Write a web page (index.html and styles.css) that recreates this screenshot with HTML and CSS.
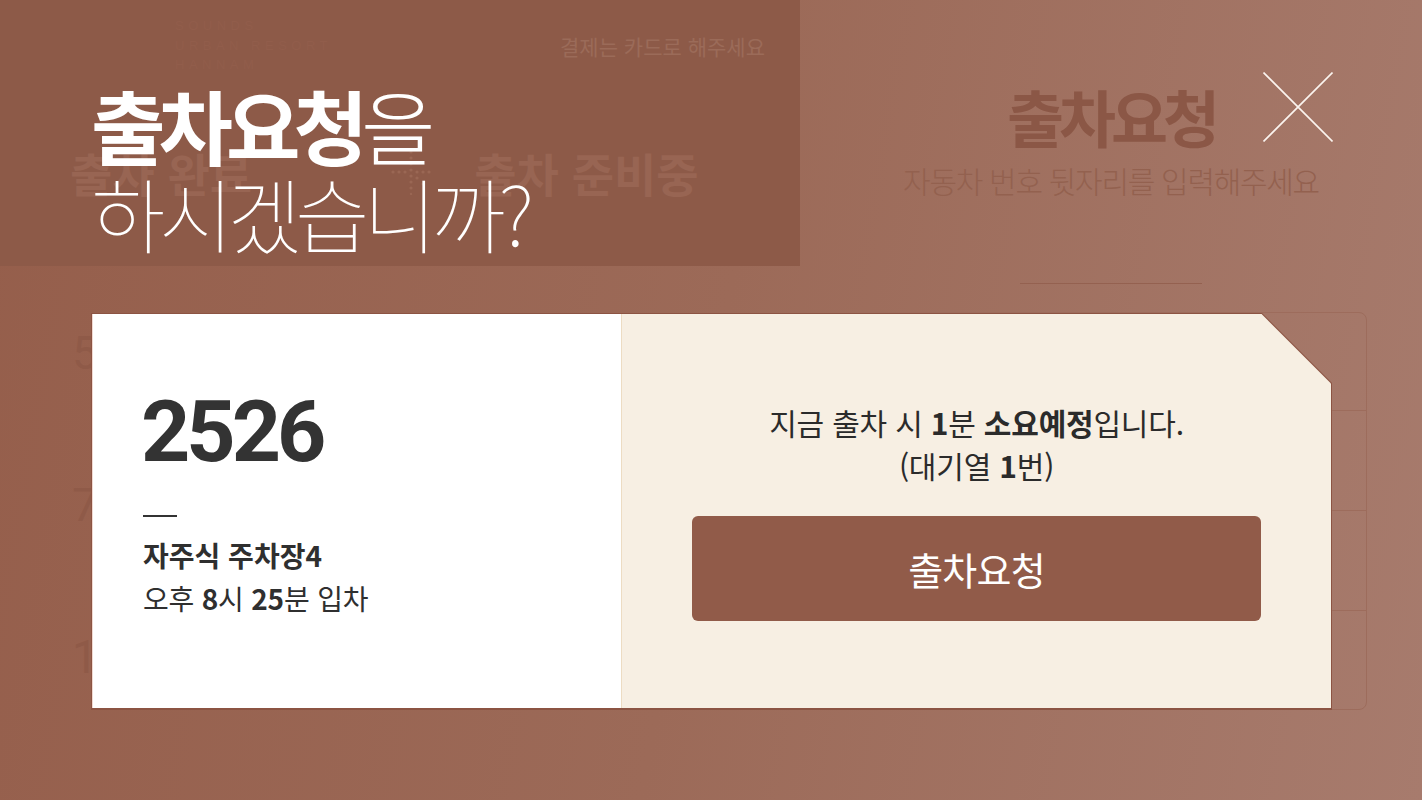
FILE: index.html
```html
<!DOCTYPE html>
<html lang="ko">
<head>
<meta charset="utf-8">
<title>출차요청</title>
<link rel="stylesheet" href="styles.css">
</head>
<body>
<div class="page">
  <section class="pg-left">
    <header class="pg-head">
      <div class="logo-row">
        <div class="logo">
          <span>SOUNDS</span>
          <span>URBAN RESORT</span>
          <span>HANNAM</span>
        </div>
        <p class="pay-note">결제는 카드로 해주세요</p>
      </div>
      <div class="status-row">
        <span class="st st-done">출차 완료</span>
        <svg class="st-dots" width="48" height="46" viewBox="0 0 48 46">
          <g fill="#9a6754">
            <circle cx="24" cy="3" r="1.6"/><circle cx="24" cy="9" r="1.6"/><circle cx="24" cy="15" r="1.6"/>
            <circle cx="24" cy="21" r="1.6"/><circle cx="24" cy="27" r="1.6"/><circle cx="24" cy="33" r="1.6"/>
            <circle cx="24" cy="39" r="1.6"/><circle cx="24" cy="45" r="1.2"/>
            <circle cx="6" cy="23" r="1.6"/><circle cx="12" cy="23" r="1.6"/><circle cx="18" cy="23" r="1.6"/>
            <circle cx="30" cy="23" r="1.6"/><circle cx="36" cy="23" r="1.6"/><circle cx="42" cy="23" r="1.6"/>
            <circle cx="30" cy="29" r="1.6"/><circle cx="36" cy="35" r="1.6"/>
          </g>
        </svg>
        <span class="st st-prep">출차 준비중</span>
      </div>
    </header>
    <ul class="ghost-list">
      <li>5</li>
      <li>7</li>
      <li>1</li>
    </ul>
  </section>
  <section class="pg-right">
    <h2 class="pr-title">출차요청</h2>
    <p class="pr-sub">자동차 번호 뒷자리를 입력해주세요</p>
    <div class="pr-line"></div>
    <div class="keypad">
      <div class="kp-row"></div>
      <div class="kp-row"></div>
      <div class="kp-row"></div>
      <div class="kp-row"></div>
    </div>
  </section>
</div>

<div class="modal">
  <button class="close" aria-label="닫기">
    <svg width="70" height="70" viewBox="0 0 70 70">
      <path d="M0.5 0.5 L69.5 69.5 M69.5 0.5 L0.5 69.5" stroke="#fbf4ef" stroke-width="1.6" fill="none"/>
    </svg>
  </button>
  <h1 class="m-title"><span class="t-strong">출차요청</span><span class="t-light">을</span><br><span class="t-thin">하시겠습니까?</span></h1>
  <div class="card">
    <div class="card-inner">
      <div class="car-info">
        <div class="plate">2526</div>
        <div class="dash"></div>
        <div class="lot">자주식 주차장<span class="num">4</span></div>
        <div class="time">오후 <span class="num">8</span>시 <span class="num">25</span>분 입차</div>
      </div>
      <div class="req">
        <p class="req-text">지금 출차 시 <b>1</b>분 <b>소요예정</b>입니다.<br>(대기열 <b>1</b>번)</p>
        <button class="req-btn">출차요청</button>
      </div>
    </div>
  </div>
</div>
</body>
</html>
```

FILE: styles.css
```css
* { box-sizing: border-box; }

body {
  margin: 0;
  width: 1422px;
  height: 800px;
  overflow: hidden;
  position: relative;
  font-family: "Noto Sans CJK KR", "Noto Sans", sans-serif;
  background: linear-gradient(100deg, #955e4b 0%, #9c6a58 50%, #a77b6d 100%);
}

/* ---------- background page (dimmed) ---------- */
.page {
  display: grid;
  grid-template-columns: 800px 1fr;
  height: 800px;
}

.pg-head {
  height: 266px;
  background: #8d5a48;
  padding-top: 16px;
}

.logo-row {
  display: flex;
  align-items: flex-start;
}

.logo {
  display: flex;
  flex-direction: column;
  padding-left: 175px;
  font-family: "Liberation Sans", Arial, sans-serif;
  font-size: 13px;
  letter-spacing: 4.5px;
  line-height: 19.5px;
  color: #915d4b;
}

.pay-note {
  margin: 15px 35px 0 auto;
  font-size: 21px;
  line-height: 30px;
  letter-spacing: 0;
  color: #9b6b59;
}

.status-row {
  display: flex;
  align-items: center;
  margin-top: 67px;
  padding-left: 70px;
  height: 60px;
}

.st {
  font-size: 46px;
  font-weight: 700;
  letter-spacing: 0;
  line-height: 60px;
  color: #986553;
}

.st-dots { margin-left: 135px; margin-right: 39px; }

.ghost-list {
  list-style: none;
  margin: 0;
  padding: 11px 0 0 72px;
  font-family: Roboto, sans-serif;
  font-size: 46px;
  line-height: 152px;
  color: #8f5a48;
}

.pg-right {
  display: flex;
  flex-direction: column;
  align-items: center;
  padding: 84px 55px 0 55px;
}

.pr-title {
  margin: 0;
  font-size: 62px;
  font-weight: 700;
  letter-spacing: -5px;
  line-height: 64px;
  color: #8b5746;
}

.pr-sub {
  margin: 12px 0 0;
  font-size: 30px;
  line-height: 40px;
  letter-spacing: -1.3px;
  font-weight: 300;
  color: #93614f;
}

.pr-line {
  width: 182px;
  height: 1px;
  margin-top: 83px;
  background: #946150;
}

.keypad {
  align-self: stretch;
  margin-top: 28px;
  border: 1px solid #9d6c5c;
  border-radius: 8px;
  display: grid;
  grid-template-rows: 97px 100px 100px 99px;
}

.kp-row + .kp-row { border-top: 1px solid #9d6c5c; }

/* ---------- modal ---------- */
.modal {
  position: absolute;
  inset: 0;
  padding: 80px 90px 0 91px;
}

.close {
  position: absolute;
  top: 72px;
  left: 1263px;
  width: 70px;
  height: 70px;
  padding: 0;
  border: 0;
  background: none;
  display: block;
}
.close svg { display: block; }

.m-title {
  margin: 0;
  font-size: 81px;
  line-height: 88px;
  letter-spacing: -7px;
  color: #ffffff;
  font-weight: 400;
}

.t-strong { font-weight: 700; }
.t-light { font-weight: 300; }
.t-thin { font-weight: 100; letter-spacing: -6.5px; }

.card {
  margin-top: 57px;
  width: 1241px;
  height: 397px;
  padding: 1px 1px 2px 1px;
  background: #8c5443;
  clip-path: polygon(0 0, calc(100% - 70px) 0, 100% 70px, 100% 100%, 0 100%);
}

.card-inner {
  display: flex;
  height: 100%;
  clip-path: polygon(0 0, calc(100% - 69.4px) 0, 100% 69.4px, 100% 100%, 0 100%);
}

.car-info {
  width: 531px;
  background: #ffffff;
  box-shadow: inset 1px 0 0 #f1d9d1;
  border-right: 1px solid #eddcc3;
  padding: 75px 0 0 51px;
  color: #2f2f2f;
}

.plate {
  font-family: Roboto, "Liberation Sans", sans-serif;
  font-weight: 700;
  font-size: 86px;
  line-height: 86px;
  letter-spacing: -4px;
  margin-left: -2px;
  color: #333333;
}

.dash {
  width: 34px;
  height: 1.5px;
  margin-top: 40px;
  background: #333333;
}

.lot {
  margin-top: 18px;
  font-size: 28px;
  line-height: 40px;
  letter-spacing: 0;
  font-weight: 700;
}

.time {
  margin-top: 3px;
  font-size: 28px;
  line-height: 40px;
  letter-spacing: -0.2px;
  font-weight: 400;
}

.num { font-weight: 700; }

.req {
  flex: 1;
  background: #f7efe3;
  display: flex;
  flex-direction: column;
  align-items: center;
  padding: 87px 70px 0 70px;
}

.req-text {
  margin: 0;
  text-align: center;
  font-size: 30px;
  line-height: 43px;
  letter-spacing: -0.2px;
  color: #2b2b2b;
}

.req-text b { font-weight: 700; }

.req-btn {
  margin-top: 29px;
  width: 569px;
  height: 105px;
  border: 0;
  border-radius: 6px;
  background: #915b49;
  color: #ffffff;
  font-family: "Noto Sans CJK KR", "Noto Sans", sans-serif;
  font-size: 38px;
  letter-spacing: -0.8px;
  font-weight: 400;
  padding: 0;
}
```
